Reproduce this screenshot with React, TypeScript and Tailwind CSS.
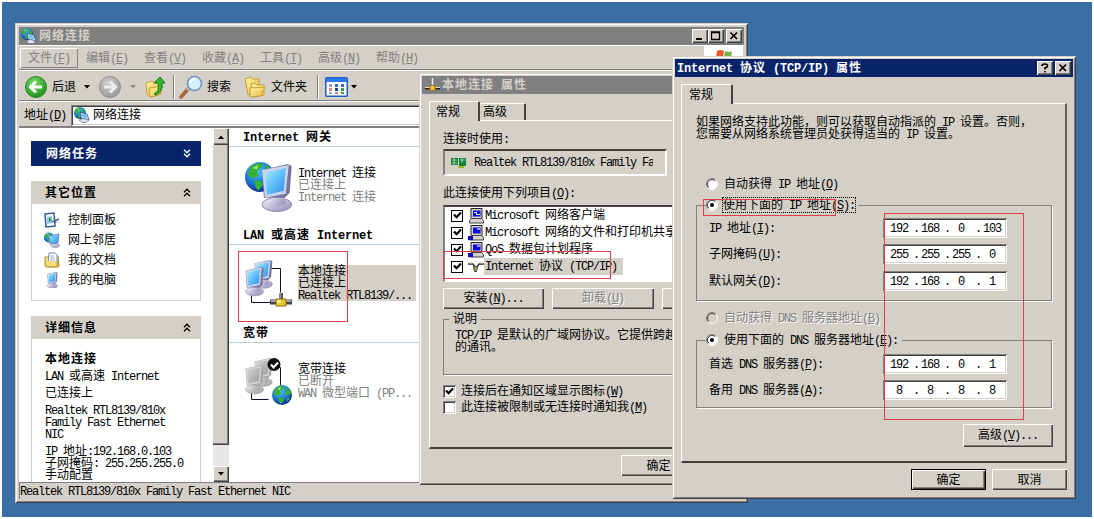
import { ReactNode } from "react";
import clsx from "clsx";

const raised =
  "bg-[#d4d0c8] shadow-[inset_1px_1px_0_#fff,inset_-1px_-1px_0_#404040,inset_-2px_-2px_0_#808080]";
const sunken =
  "bg-white shadow-[inset_1px_1px_0_#808080,inset_-1px_-1px_0_#fff,inset_2px_2px_0_#404040,inset_-2px_-2px_0_#d4d0c8]";
const frame =
  "bg-[#d4d0c8] shadow-[inset_1px_1px_0_#d4d0c8,inset_-1px_-1px_0_#404040,inset_2px_2px_0_#fff,inset_-2px_-2px_0_#808080]";

// Latin runs sit on a 6px grid (7px when bold), ideographs on 12px (13px).
function T({ children, bold }: { children: string; bold?: boolean }) {
  const runs = children.split(/([\u3000-\u9fff\uff00-\uffef]+)/).filter(Boolean);
  return (
    <span className={clsx("whitespace-pre", bold && "font-bold")}>
      {runs.map((run, i) => {
        if (/[\u3000-\uffef]/.test(run)) {
          return (
            <span key={i} className={bold ? "tracking-[1px]" : ""}>
              {run}
            </span>
          );
        }
        const key = run.match(/^([^]*\()([A-Z])(\)[^]*)$/);
        return (
          <span
            key={i}
            className={clsx(
              "font-['Liberation_Mono',monospace] text-[12px]",
              bold ? "tracking-[-0.2px]" : "tracking-[-1.2px]"
            )}
          >
            {key ? (
              <>
                {key[1]}
                <u className="underline-offset-1">{key[2]}</u>
                {key[3]}
              </>
            ) : (
              run
            )}
          </span>
        );
      })}
    </span>
  );
}

function Line({ children, className, bold }: { children: string; className?: string; bold?: boolean }) {
  return (
    <div className={clsx("flex h-3 shrink-0 items-center leading-3", className)}>
      <T bold={bold}>{children}</T>
    </div>
  );
}

function PushButton({ label, className, disabled }: { label: string; className?: string; disabled?: boolean }) {
  return (
    <button
      className={clsx(
        "flex shrink-0 items-center justify-center leading-3",
        raised,
        disabled && "text-[#808080] [text-shadow:1px_1px_0_#fff]",
        className
      )}
    >
      <T>{label}</T>
    </button>
  );
}

function CaptionButton({ children, className }: { children: ReactNode; className?: string }) {
  return (
    <button className={clsx("flex h-[14px] w-4 items-center justify-center", raised, className)}>
      <svg width="10" height="10" viewBox="0 0 10 10" fill="none" stroke="#000">
        {children}
      </svg>
    </button>
  );
}

const closeMark = <path d="M1.5 1.5l6.5 6.5M8 1.5L1.5 8" strokeWidth="1.7" />;

function CheckBox({ checked }: { checked?: boolean }) {
  return (
    <span className={clsx("flex h-[13px] w-[13px] shrink-0 items-center justify-center", sunken)}>
      {checked && (
        <svg width="9" height="9" viewBox="0 0 9 9" fill="none" stroke="#000" strokeWidth="2.2">
          <path d="M1 3.5l2.5 2.7L8 1.6" />
        </svg>
      )}
    </span>
  );
}

function ListCheck() {
  return (
    <span className="flex h-[12px] w-[12px] shrink-0 items-center justify-center border border-black bg-white">
      <svg width="9" height="9" viewBox="0 0 9 9" fill="none" stroke="#000" strokeWidth="2.2">
        <path d="M1 3.5l2.5 2.7L8 1.6" />
      </svg>
    </span>
  );
}

function Radio({ on, disabled }: { on?: boolean; disabled?: boolean }) {
  return (
    <svg className="shrink-0" width="12" height="12" viewBox="0 0 12 12" fill="none">
      <circle cx="6" cy="6" r="5" fill={disabled ? "#d4d0c8" : "#fff"} />
      <path d="M9.9 2.1A5.5 5.5 0 0 0 2.1 9.9" stroke="#808080" />
      <path d="M9.2 2.8A4.5 4.5 0 0 0 2.8 9.2" stroke="#404040" />
      <path d="M9.9 2.1A5.5 5.5 0 0 1 2.1 9.9" stroke="#fff" />
      {on && <circle cx="6" cy="6" r="2" fill="#000" />}
    </svg>
  );
}

function Chevrons({ down, color }: { down?: boolean; color: string }) {
  return (
    <svg width="8" height="9" viewBox="0 0 8 9" fill="none" stroke={color} strokeWidth="1.3">
      {down ? <path d="M1 .8l3 3 3-3M1 4.8l3 3 3-3" /> : <path d="M1 4.2l3-3 3 3M1 8.2l3-3 3 3" />}
    </svg>
  );
}

function Caret({ color = "#000", className }: { color?: string; className?: string }) {
  return (
    <svg className={className} width="6" height="4" viewBox="0 0 6 4">
      <path d="M0 0h6L3 3.4z" fill={color} />
    </svg>
  );
}

function Defs() {
  return (
    <svg width="0" height="0" className="absolute">
      <defs>
        <linearGradient id="screen" x1="0" y1="0" x2="1" y2="1">
          <stop offset="0" stopColor="#b0ecff" />
          <stop offset="0.5" stopColor="#5ec0f8" />
          <stop offset="1" stopColor="#3489e8" />
        </linearGradient>
        <linearGradient id="screenOff" x1="0" y1="0" x2="1" y2="1">
          <stop offset="0" stopColor="#d8d8d8" />
          <stop offset="1" stopColor="#999" />
        </linearGradient>
        <linearGradient id="shell" x1="0" y1="0" x2="1" y2="1">
          <stop offset="0" stopColor="#f4f4fc" />
          <stop offset="1" stopColor="#8c88b4" />
        </linearGradient>
        <linearGradient id="shellOff" x1="0" y1="0" x2="1" y2="1">
          <stop offset="0" stopColor="#f0f0f0" />
          <stop offset="1" stopColor="#999" />
        </linearGradient>
        <radialGradient id="ocean" cx="0.4" cy="0.3" r="0.7">
          <stop offset="0" stopColor="#59c4ff" />
          <stop offset="0.6" stopColor="#1878d8" />
          <stop offset="1" stopColor="#0c2f96" />
        </radialGradient>
        <linearGradient id="paper" x1="0" y1="0" x2="1" y2="1">
          <stop offset="0" stopColor="#fff6a8" />
          <stop offset="1" stopColor="#e6b53c" />
        </linearGradient>
        <radialGradient id="go" cx="0.4" cy="0.3" r="0.8">
          <stop offset="0" stopColor="#7ed867" />
          <stop offset="1" stopColor="#158a13" />
        </radialGradient>
        <radialGradient id="stop" cx="0.4" cy="0.3" r="0.8">
          <stop offset="0" stopColor="#d0d0d0" />
          <stop offset="1" stopColor="#929292" />
        </radialGradient>
      </defs>
    </svg>
  );
}

function Globe({ x, y, r }: { x: number; y: number; r: number }) {
  return (
    <g transform={`translate(${x} ${y}) scale(${r / 10})`}>
      <circle r="10" fill="url(#ocean)" />
      <path d="M-7-6Q-3-10 2-9L1-6L-2-4L-1-1L-5 1L-8-1ZM-4 2L1 3L2 5L-1 9L-3 7ZM4-8Q8-6 9-2L6 1L3-1L4-4ZM5 3L8 3L5 7Z" fill="#37b034" />
      <path d="M-5-6l4-2-1 3z" fill="#a8ec78" />
    </g>
  );
}

// A tilted CRT; drawn in a 32x48 box
function Monitor({ x, y, s, off }: { x: number; y: number; s: number; off?: boolean }) {
  const shell = off ? "url(#shellOff)" : "url(#shell)";
  return (
    <g transform={`translate(${x} ${y}) scale(${s})`}>
      <ellipse cx="16" cy="41" rx="15" ry="7" fill={shell} stroke={off ? "#999" : "#8d89b2"} />
      <path d="M11 28h12l2 12q-8 5-15 0z" fill={shell} />
      <path d="M1 6L27 0l4 2-2 27-5 5-21 0z" fill={off ? "#a5a5a5" : "#77749c"} />
      <path d="M1 6L28 1l-3 29L4 34z" fill={off ? "#d4d4d4" : "#c9d4ec"} />
      <path d="M4 9l21-5-2 23L6 31z" fill={off ? "url(#screenOff)" : "url(#screen)"} />
    </g>
  );
}

function GatewayIcon() {
  return (
    <svg width="48" height="50" viewBox="0 0 48 50">
      <Globe x={15} y={15} r={15} />
      <Monitor x={16} y={2} s={0.99} />
    </svg>
  );
}

function LinkIcon({ off }: { off?: boolean }) {
  return (
    <svg width="48" height="50" viewBox="0 0 48 50" fill="none">
      <path d={off ? "M30 9.5h5.500v18M6.500 35v6.500h17" : "M26 8.500h9.500v24M6.500 35v7.500h20"} stroke="#101038" />
      <Monitor x={9} y={0} s={0.59} off={off} />
      <Monitor x={0} y={7} s={0.6} off={off} />
      {off ? (
        <>
          <Globe x={37} y={37} r={10} />
          <circle cx="29" cy="6.500" r="6.500" fill="#111" />
          <path d="M26 6.500l2.500 3 4.500-5" stroke="#fff" strokeWidth="2" />
        </>
      ) : (
        <>
          <path d="M36 33v8" stroke="#555" strokeWidth="4" />
          <path d="M35 33v8" stroke="#ccc" />
          <path d="M25 42h22" stroke="#444" strokeWidth="5" />
          <path d="M26 41h20" stroke="#c8c8c8" strokeWidth="1.5" />
          <path d="M31 39h10v7H31z" fill="#efc52e" stroke="#8c6a08" />
          <path d="M32 40h4v3h-4z" fill="#fff19a" />
        </>
      )}
    </svg>
  );
}

// Globe behind a screen, as in the title and address bars
function NetworkIcon() {
  return (
    <svg width="16" height="16" viewBox="0 0 16 16">
      <Globe x={6} y={6} r={6} />
      <path d="M6 5l7 2 2 6-8-2z" fill="#d6e6f6" stroke="#31527c" strokeWidth=".8" />
      <path d="M7 6l5 1.500 1.500 4-5.500-1.500z" fill="#6fc0f5" />
      <path d="M5 13l4-1.500 6 1.500-3 2.500H8z" fill="#dfe3ee" stroke="#56688c" strokeWidth=".6" />
    </svg>
  );
}

const places = [
  {
    name: "控制面板",
    icon: (
      <svg width="16" height="16" viewBox="0 0 16 16">
        <path d="M1 2l9-1 1 13-9 1z" fill="#fff" stroke="#3a5a98" strokeWidth="1.5" />
        <path d="M3 5l5-1v7l-5 1z" fill="#8fc7f2" />
        <path d="M5 5v5l3-2z" fill="#319c3c" />
        <path d="M8 10l7-3M10 6l2 5" stroke="#5068a0" strokeWidth="1.600" />
      </svg>
    ),
  },
  {
    name: "网上邻居",
    icon: (
      <svg width="16" height="16" viewBox="0 0 16 16">
        <Globe x={5} y={5.5} r={5} />
        <ellipse cx="11" cy="13.500" rx="4.500" ry="2" fill="url(#shell)" stroke="#8d89b2" strokeWidth=".5" />
        <path d="M5 4l10-2-1 9-8 1z" fill="url(#screen)" stroke="#6f7fae" strokeWidth=".8" />
      </svg>
    ),
  },
  {
    name: "我的文档",
    icon: (
      <svg width="16" height="16" viewBox="0 0 16 16">
        <path d="M1 5h4l9-1 1 10-1 1H2l-1-2z" fill="url(#paper)" stroke="#a98425" />
        <path d="M5 1h6l2 2v9H4z" fill="#fff" stroke="#7b8bb4" />
        <path d="M6 4h4M6 6h5M6 8h5" stroke="#9ab0d8" />
        <path d="M2 9h10v5H3z" fill="#f7da7b" />
      </svg>
    ),
  },
  {
    name: "我的电脑",
    icon: (
      <svg width="16" height="16" viewBox="0 0 16 16">
        <Monitor x={3} y={0} s={0.34} />
      </svg>
    ),
  },
];

const menus = ["文件(F)", "编辑(E)", "查看(V)", "收藏(A)", "工具(T)", "高级(N)", "帮助(H)"];

function FolderIcon({ up }: { up?: boolean }) {
  return (
    <svg width="23" height="22" viewBox="0 0 23 22" fill="none">
      {up ? (
        <>
          <path d="M1 7l6-2 2 2 7-1v12L5 21 2 18z" fill="url(#paper)" stroke="#c79b33" />
          <path d="M4 12l14-2-4 9-9 2z" fill="#f9df79" stroke="#c79b33" />
          <path d="M9 18q6-3 4-11h-4l6-6 5 6h-3q1 8-6 12z" fill="#38b52d" stroke="#16791a" />
        </>
      ) : (
        <>
          <path d="M2 3l6-2 2 2 6 0v12L5 19z" fill="url(#paper)" stroke="#c79b33" />
          <path d="M8 8l4-1 2 2 7 0v10l-11 2z" fill="#fbe88c" stroke="#c79b33" />
          <path d="M7 12l15-1-4 9-11 1z" fill="url(#paper)" stroke="#c79b33" />
        </>
      )}
    </svg>
  );
}

function Toolbar() {
  return (
    <div className="flex h-[31px] shrink-0 items-center border-t border-b border-t-white border-b-[#808080] pt-0.5 pl-1.5 leading-3">
      <svg width="22" height="22" viewBox="0 0 22 22" fill="none">
        <circle cx="11" cy="11" r="10.500" fill="url(#go)" stroke="#23851e" />
        <path d="M17 11H7M11 5.500L5.500 11l5.500 5.500" stroke="#fff" strokeWidth="3" />
      </svg>
      <span className="ml-[5px]">后退</span>
      <Caret className="ml-2" />
      <svg className="ml-[9px]" width="22" height="22" viewBox="0 0 22 22" fill="none">
        <circle cx="11" cy="11" r="10.500" fill="url(#stop)" stroke="#8e8e8e" />
        <path d="M5 11h10M11 5.500l5.500 5.500-5.500 5.500" stroke="#eee" strokeWidth="3" />
      </svg>
      <Caret className="ml-[9px]" color="#909090" />
      <span className="ml-[9px] w-[23px]">
        <FolderIcon up />
      </span>
      <span className="ml-[5px] h-6 w-0.5 border-l border-r border-l-[#808080] border-r-white" />
      <svg className="ml-1" width="24" height="24" viewBox="0 0 24 24" fill="none">
        <path d="M2 22l7-8" stroke="#a8643c" strokeWidth="3.500" strokeLinecap="round" />
        <path d="M8 15l2-2" stroke="#c9c9d8" strokeWidth="2" />
        <circle cx="15.500" cy="8.500" r="7" fill="#d3f0ff" stroke="#7392c6" strokeWidth="1.600" />
        <path d="M11 8q1-4 5-4" stroke="#fff" strokeWidth="2" />
      </svg>
      <span className="ml-1">搜索</span>
      <span className="ml-3 w-[23px]">
        <FolderIcon />
      </span>
      <span className="ml-[5px]">文件夹</span>
      <span className="ml-[10px] h-6 w-0.5 border-l border-r border-l-[#808080] border-r-white" />
      <svg className="ml-1.5" width="23" height="20" viewBox="0 0 23 20">
        <rect x=".75" y=".75" width="21.500" height="18.500" rx="1" fill="#fff" stroke="#1d5fbe" strokeWidth="1.500" />
        <rect x="1" y="1" width="21" height="4" fill="#2c7ae8" />
        <path d="M4 7h3v3H4zM4 15h3v2H4z" fill="#9aa7c8" />
        <path d="M4 11h3v3H4zM10 15h3v2h-3z" fill="#e08a78" />
        <path d="M10 7h3v3h-3zM16 7h3v3h-3z" fill="#3067c9" />
        <path d="M10 11h3v3h-3z" fill="#1c3c9c" />
        <path d="M16 11h3v3h-3zM16 15h3v2h-3z" fill="#469449" />
      </svg>
      <Caret className="ml-[3px]" />
    </div>
  );
}

function TaskPane() {
  return (
    <div className="flex h-full w-[194px] shrink-0 flex-col overflow-hidden bg-white pt-[13px] pl-3">
      <div className="flex h-[25px] w-[170px] shrink-0 items-center justify-between bg-[#0a246a] pr-2.5 pl-[15px] text-white">
        <T bold>网络任务</T>
        <Chevrons down color="#fff" />
      </div>
      <div className="mt-[15px] flex h-[23px] w-[170px] shrink-0 items-center justify-between bg-[#d4d0c8] pr-2.5 pl-3.5">
        <T bold>其它位置</T>
        <Chevrons color="#000" />
      </div>
      <div className="h-[97px] w-[170px] shrink-0 border border-t-0 border-[#d4d0c8] pt-[6px] pl-3">
        {places.map((place) => (
          <div key={place.name} className="flex h-5 items-center gap-2 leading-3">
            {place.icon}
            {place.name}
          </div>
        ))}
      </div>
      <div className="mt-[15px] flex h-[23px] w-[170px] shrink-0 items-center justify-between bg-[#d4d0c8] pr-2.5 pl-3.5">
        <T bold>详细信息</T>
        <Chevrons color="#000" />
      </div>
      <div className="flex w-[170px] flex-1 flex-col border-x border-[#d4d0c8] pt-[14px] pl-[13px]">
        <Line bold>本地连接</Line>
        <Line className="mt-[5px]">LAN 或高速 Internet</Line>
        <Line className="mt-[5px]">已连接上</Line>
        <Line className="mt-[5px]">Realtek RTL8139/810x</Line>
        <Line>Family Fast Ethernet</Line>
        <Line>NIC</Line>
        <Line className="mt-[5px]">IP 地址:192.168.0.103</Line>
        <Line>子网掩码: 255.255.255.0</Line>
        <Line>手动配置</Line>
      </div>
    </div>
  );
}

function ScrollBar() {
  return (
    <div className="flex h-full w-4 shrink-0 flex-col bg-[#e9e7e3]">
      <div className={clsx("flex h-[17px] items-center justify-center", raised)}>
        <Caret className="rotate-180" />
      </div>
      <div className="h-[300px] bg-[#d4d0c8] shadow-[inset_-1px_-1px_0_#404040,inset_-2px_-2px_0_#808080]" />
      <div className="flex-1" />
      <div className={clsx("flex h-4 items-center justify-center", raised)}>
        <Caret />
      </div>
    </div>
  );
}

interface Connection {
  group: string;
  lines: string[];
  icon: ReactNode;
  selected?: boolean;
}

const connections: Connection[] = [
  { group: "Internet 网关", lines: ["Internet 连接", "已连接上", "Internet 连接"], icon: <GatewayIcon /> },
  {
    group: "LAN 或高速 Internet",
    lines: ["本地连接", "已连接上", "Realtek RTL8139/..."],
    icon: <LinkIcon />,
    selected: true,
  },
  { group: "宽带", lines: ["宽带连接", "已断开", "WAN 微型端口 (PP..."], icon: <LinkIcon off /> },
];

function ConnectionList() {
  return (
    <div className="flex-1 bg-white pt-[3px]">
      {connections.map(({ group, lines, icon, selected }) => (
        <div key={group} className="h-[98px]">
          <Line bold className="pl-3.5">{group}</Line>
          <div className="mt-[3px] h-px bg-[#b9cfe3]" />
          <div className="flex pt-[15px] pl-4">
            {icon}
            <div className={clsx("mt-[5px] ml-[5px] h-9 w-[118px]", selected && "bg-[#d4d0c8]")}>
              {lines.map((line, i) => (
                <Line key={i} className={i > 0 && !selected ? "text-[#808080]" : ""}>
                  {line}
                </Line>
              ))}
            </div>
          </div>
        </div>
      ))}
    </div>
  );
}

function ExplorerWindow() {
  return (
    <section className={clsx("absolute top-[23px] left-[15px] flex h-[480px] w-[733px] flex-col p-1", frame)}>
      <header className="flex h-[18px] shrink-0 items-center bg-[#808080] pr-0.5 pl-0.5 text-[#d4d0c8]">
        <NetworkIcon />
        <span className="ml-0.5 flex-1">
          <T bold>网络连接</T>
        </span>
        <CaptionButton><path d="M1 8h6" strokeWidth="2" /></CaptionButton>
        <CaptionButton><path d="M.5 1h8v7.500h-8zM.5 1.500h8" strokeWidth="1.300" /></CaptionButton>
        <CaptionButton className="ml-0.5">{closeMark}</CaptionButton>
      </header>
      <nav className="flex h-[25px] shrink-0 items-end border-t border-b border-t-white border-b-[#808080] pl-px text-[#808080]">
        {menus.map((menu, i) => (
          <div
            key={menu}
            className={clsx(
              "mb-px flex h-5 w-[58px] items-center pt-px pl-2 leading-3",
              i === 0 && "shadow-[inset_1px_1px_0_#fff,inset_-1px_-1px_0_#808080]"
            )}
          >
            <T>{menu}</T>
          </div>
        ))}
        <div className="mr-px ml-auto flex h-full w-[39px] items-start justify-center bg-white pt-[3px]">
          <svg width="18" height="16" viewBox="0 0 18 16">
            <path d="M2 2q3-2 7 0L8 8Q4 6 1 8z" fill="#e8592c" />
            <path d="M10 2q4 2 7 0l-1 7q-4 1-7-1z" fill="#70b545" />
            <path d="M1 9q3-2 7 0l-1 5Q4 13 0 14z" fill="#3e82d6" />
            <path d="M9 9q4 2 7 1l-1 5q-4 1-7-1z" fill="#f4c430" />
          </svg>
        </div>
      </nav>
      <Toolbar />
      <div className="flex h-[25px] shrink-0 items-center border-t border-white pt-0.5 pl-[5px] leading-3">
        <T>地址(D)</T>
        <div className={clsx("ml-[5px] flex h-[21px] flex-1 items-center pl-[3px]", sunken)}>
          <NetworkIcon />
          <span className="ml-[3px]">网络连接</span>
        </div>
      </div>
      <div className="flex h-[356px] shrink-0 border-t-2 border-[#808080]">
        <TaskPane />
        <ScrollBar />
        <ConnectionList />
      </div>
      <footer className="flex flex-1 items-center pt-0.5 pl-px leading-3 shadow-[inset_1px_1px_0_#808080]">
        <T>Realtek RTL8139/810x Family Fast Ethernet NIC</T>
      </footer>
    </section>
  );
}

function PcIcon({ plug }: { plug?: boolean }) {
  return (
    <svg width="16" height="16" viewBox="0 0 16 16">
      <path d="M3 .5h11v10H3z" fill="#d4d0c8" stroke="#222" />
      <path d="M5 2.500h7.500v6H5z" fill="#0a0ae0" />
      {plug ? <path d="M9 3h3v2H9z" fill="#8c9cff" /> : <path d="M6 4h3v2h3v1H8V5H6z" fill="#e8f0ff" />}
      <path d="M1.500 12.500l2-2h10l2 2v2.500h-14z" fill="#d4d0c8" stroke="#444" />
      {plug && <path d="M0 11h5v4H0z" fill="#1010b8" />}
    </svg>
  );
}

const components = [
  { name: "Microsoft 网络客户端", icon: <PcIcon /> },
  { name: "Microsoft 网络的文件和打印机共享", icon: <PcIcon plug /> },
  { name: "QoS 数据包计划程序", icon: <PcIcon plug /> },
  {
    name: "Internet 协议 (TCP/IP)",
    icon: (
      <svg width="16" height="16" viewBox="0 0 16 16" fill="none">
        <path d="M0 5h5l2 3M16 5h-5L9 8" stroke="#333" strokeWidth="1.500" />
        <path d="M5.500 7.500h4l-1 5h-2z" fill="#9aa844" stroke="#444" />
        <path d="M1 4h3M11 4h4" stroke="#bbb" />
      </svg>
    ),
    selected: true,
  },
];

function ConnectionProperties() {
  return (
    <section className={clsx("absolute top-[73px] left-[419px] flex h-[412px] w-[300px] flex-col overflow-hidden p-[3px]", frame)}>
      <header className="flex h-[18px] shrink-0 items-center bg-[#808080] pl-[3px] text-[#d4d0c8]">
        <svg width="15" height="14" viewBox="0 0 15 14" fill="none">
          <path d="M7.500 0v8" stroke="#e8e8e8" strokeWidth="1.500" />
          <path d="M0 10.500h15" stroke="#222" strokeWidth="2" />
          <path d="M0 9.500h15" stroke="#ddd" />
          <path d="M5 7.500h5v5H5z" fill="#f4c534" stroke="#9a7418" />
        </svg>
        <span className="ml-0.5">
          <T bold>本地连接 属性</T>
        </span>
      </header>
      <div className="flex h-[26px] shrink-0 items-end pl-[7px]">
        <div className="z-10 -mb-px flex h-[20px] w-[51px] items-center rounded-t-[2px] border-t border-r-2 border-l border-white border-r-[#404040] bg-[#d4d0c8] pl-1.5 leading-3">
          常规
        </div>
        <div className="flex h-[17px] w-[46px] items-center rounded-t-[2px] border-t border-r-2 border-white border-r-[#404040] pl-[3px] leading-3">
          高级
        </div>
      </div>
      <div className="ml-[7px] flex h-[329px] shrink-0 flex-col border-t border-b-2 border-l border-white border-b-[#404040] pl-[13px]">
        <Line className="mt-[12px]">连接时使用:</Line>
        <div className="mt-[4px] flex h-[27px] w-[224px] shrink-0 items-center border-2 border-[#fff] border-t-[#404040] border-l-[#808080] pl-1.5">
          <svg width="16" height="12" viewBox="0 0 16 12">
            <path d="M0 1h7v7H0zM8 1h7v8H8z" fill="#118034" />
            <path d="M1 3h5M1 6h5M3 1v7M9 3h5M11 1v5" stroke="#b8e0b8" strokeWidth=".8" />
            <path d="M7 9h6v2H7z" fill="#aab322" />
          </svg>
          <div className="ml-[7px] w-[179px] overflow-hidden leading-3">
            <T>Realtek RTL8139/810x Family Fast</T>
          </div>
        </div>
        <Line className="mt-[11px]">此连接使用下列项目(O):</Line>
        <div className="mt-[6px] h-[77px] w-[260px] shrink-0 border-t-2 border-b border-l-2 border-t-[#404040] border-b-white border-l-[#808080] bg-white">
          {components.map(({ name, icon, selected }) => (
            <div key={name} className="flex h-[17px] items-center pl-[6px] leading-3">
              <ListCheck />
              <span className="ml-[5px]">{icon}</span>
              <span className={clsx("flex h-[17px] items-center pr-[6px] pl-px", selected && "bg-[#d4d0c8]")}>
                <T>{name}</T>
              </span>
            </div>
          ))}
        </div>
        <div className="mt-[6px] flex shrink-0 gap-2">
          <PushButton label="安装(N)..." className="h-[21px] w-[101px]" />
          <PushButton label="卸载(U)" className="h-[21px] w-[102px]" disabled />
          <PushButton label="" className="h-[21px] w-[102px]" />
        </div>
        <fieldset className="mt-[4px] h-[62px] w-[260px] shrink-0 border border-[#808080] pl-[11px] shadow-[1px_1px_0_#fff]">
          <legend className="-ml-1.5 h-3 px-1 leading-3">说明</legend>
          <Line className="mt-1">TCP/IP 是默认的广域网协议。它提供跨越</Line>
          <Line>的通讯。</Line>
        </fieldset>
        <div className="mt-[10px] flex h-[13px] shrink-0 items-center gap-[5px] leading-3">
          <CheckBox checked />
          <T>连接后在通知区域显示图标(W)</T>
        </div>
        <div className="mt-[3px] flex h-[13px] shrink-0 items-center gap-[5px] leading-3">
          <CheckBox />
          <T>此连接被限制或无连接时通知我(M)</T>
        </div>
      </div>
      <PushButton label="确定" className="mt-[6px] ml-[199px] h-[21px] w-[75px]" />
    </section>
  );
}

function AddressField({ label, value, className }: { label: string; value: string[]; className?: string }) {
  return (
    <div className={clsx("flex h-5 shrink-0 items-center leading-3", className)}>
      <div className="w-[174px]">
        <T>{label}</T>
      </div>
      <div className={clsx("flex h-5 w-[124px] items-center pl-1", sunken)}>
        {value.map((part, i) => (
          <div key={i} className="flex">
            <span className="w-6 text-center">
              <T>{part}</T>
            </span>
            {i < 3 && <span className="w-[7px] pl-0.5"><T>.</T></span>}
          </div>
        ))}
      </div>
    </div>
  );
}

function TcpIpProperties() {
  return (
    <section className={clsx("absolute top-[56px] left-[672px] flex h-[443px] w-[404px] flex-col p-[3px]", frame)}>
      <header className="flex h-[18px] shrink-0 items-center bg-[#0a246a] px-0.5 text-white">
        <span className="flex-1">
          <T bold>Internet 协议 (TCP/IP) 属性</T>
        </span>
        <CaptionButton>
          <path d="M2 3q0-2 3-2 2.500 0 2.500 2 0 1.300-2.500 2v1.500M5 8v1.500" strokeWidth="1.700" />
        </CaptionButton>
        <CaptionButton className="ml-0.5">{closeMark}</CaptionButton>
      </header>
      <div className="flex h-[26px] shrink-0 items-end pl-1.5">
        <div className="z-10 -mb-px flex h-5 w-[52px] items-center rounded-t-[2px] border-t border-r-2 border-l border-white border-r-[#404040] bg-[#d4d0c8] pl-[7px] leading-3">
          常规
        </div>
      </div>
      <div className="ml-1.5 flex h-[360px] w-[386px] shrink-0 flex-col border-t border-r-2 border-b-2 border-l border-white border-r-[#606060] border-b-[#404040] pl-[14px]">
        <Line className="mt-[12px]">如果网络支持此功能，则可以获取自动指派的 IP 设置。否则，</Line>
        <Line>您需要从网络系统管理员处获得适当的 IP 设置。</Line>
        <div className="mt-[38px] flex h-3 shrink-0 items-center gap-1.5 pl-2.5 leading-3">
          <Radio />
          <T>自动获得 IP 地址(O)</T>
        </div>
        <fieldset className="mt-[7px] h-[104px] w-[356px] shrink-0 border border-[#808080] pl-3 shadow-[1px_1px_0_#fff]">
          <legend className="-ml-[3px] flex h-4 items-center gap-1 pr-0.5 leading-3">
            <Radio on />
            <span className="flex h-4 w-[134px] items-center border border-dotted border-black">
              <T>使用下面的 IP 地址(S):</T>
            </span>
          </legend>
          <AddressField className="mt-[5px]" label="IP 地址(I):" value={["192", "168", "0", "103"]} />
          <AddressField className="mt-1.5" label="子网掩码(U):" value={["255", "255", "255", "0"]} />
          <AddressField className="mt-[7px]" label="默认网关(D):" value={["192", "168", "0", "1"]} />
        </fieldset>
        <div className="mt-[11px] flex h-3 shrink-0 items-center gap-1.5 pl-2.5 leading-3 text-[#808080] [text-shadow:1px_1px_0_#fff]">
          <Radio disabled />
          <T>自动获得 DNS 服务器地址(B)</T>
        </div>
        <fieldset className="mt-2 h-[76px] w-[356px] shrink-0 border border-[#808080] pl-3 shadow-[1px_1px_0_#fff]">
          <legend className="-ml-[3px] flex h-4 items-center gap-1.5 pr-1 leading-3">
            <Radio on />
            <T>使用下面的 DNS 服务器地址(E):</T>
          </legend>
          <AddressField className="mt-[6px]" label="首选 DNS 服务器(P):" value={["192", "168", "0", "1"]} />
          <AddressField className="mt-1.5" label="备用 DNS 服务器(A):" value={["8", "8", "8", "8"]} />
        </fieldset>
        <PushButton label="高级(V)..." className="mt-[16px] ml-[267px] h-[23px] w-[90px]" />
      </div>
      <div className="mt-1.5 ml-[236px] flex gap-1.5">
        <div className="border border-black">
          <PushButton label="确定" className="h-[19px] w-[73px]" />
        </div>
        <PushButton label="取消" className="h-[21px] w-[75px]" />
      </div>
    </section>
  );
}

export default function App() {
  return (
    <div className="h-[519px] w-[1094px] overflow-hidden bg-white p-0.5 font-['Liberation_Sans','Noto_Sans_CJK_SC',sans-serif] text-[12px] text-black">
      <Defs />
      <main className="h-[515px] w-[1090px] bg-[#3a6ea5]">
        <ExplorerWindow />
        <ConnectionProperties />
        <TcpIpProperties />
        <div className="absolute top-[251px] left-[238px] z-20 h-[71px] w-[110px] border border-[#e0404a]" />
        <div className="absolute top-[251px] left-[443px] z-20 h-[28px] w-[168px] border border-[#e0404a]" />
        <div className="absolute top-[199px] left-[703px] z-20 h-[17px] w-[133px] border border-[#e0404a]" />
        <div className="absolute top-[213px] left-[884px] z-20 h-[207px] w-[140px] border border-[#e0404a]" />
      </main>
    </div>
  );
}
